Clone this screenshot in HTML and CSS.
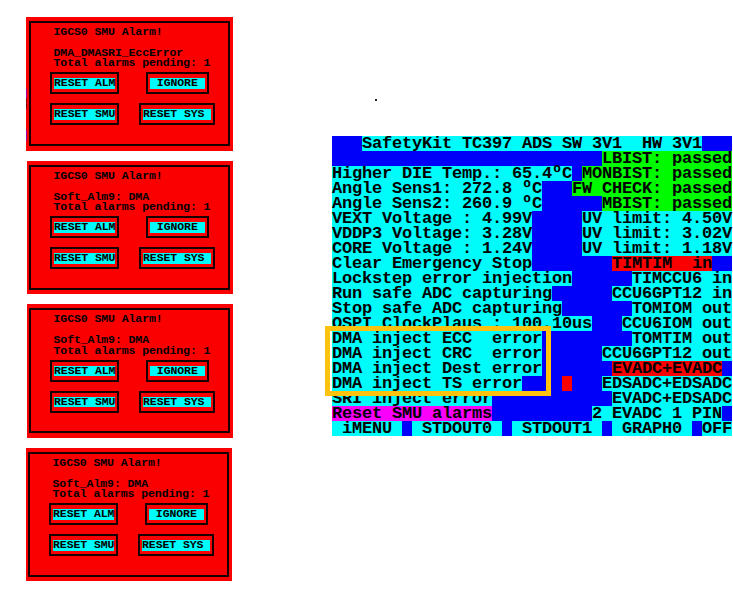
FILE: index.html
```
<!DOCTYPE html>
<html lang="en">
<head>
<meta charset="utf-8">
<title>SafetyKit TC397</title>
<link rel="stylesheet" href="styles.css">
</head>
<body>
<main class="page">
  <section class="alarms" id="alarms"></section>
  <section class="display">
    <p class="dot"></p>
    <div class="screen" id="screen"></div>
    <div class="highlight"></div>
  </section>
</main>
<script src="app.js"></script>
</body>
</html>
```
FILE: styles.css
```
* { box-sizing: border-box; }
body { margin: 0; background: #fff; color: #000; overflow: hidden; }
.page {
  display: flex;
  width: 733px;
  height: 595px;
  font-family: "Liberation Mono", monospace;
  font-weight: bold;
}
.alarms {
  display: flex;
  flex-direction: column;
  gap: 10px;
  width: 332px;
  padding: 17px 0 0 26px;
}
.alarm {
  width: 206px;
  height: 133.6px;
  margin-left: 1px;
  padding: 4px 3px 4px 2px;
  background: #fa0000;
  font-size: 11.5px;
  letter-spacing: -.08px;
  line-height: 10px;
  white-space: pre;
}
.alarm-first {
  width: 207px;
  margin-left: 0;
  padding-left: 3px;
  background: linear-gradient(#fa0000 72px, #a000a0 72px 81px, #900000 81px 92px, #fa0000 92px 113px, #a000a0 113px 124px, #fa0000 124px) 0 0 / 1px 100% no-repeat, #fa0000;
}
.alarm-last { margin-left: 0; }
.frame {
  height: 125px;
  padding: 4px 0 0 22.5px;
  border: 2px solid #180000;
}
.frame p { margin: 0; height: 10.3px; }
.frame .source { margin-top: 10.8px; }
.buttons {
  display: grid;
  grid-template-columns: 89px 78px;
  row-gap: 9px;
  margin: 3.8px 0 0 -3.5px;
}
.button {
  width: max-content;
  height: 22px;
  padding: 4px 2px;
  border: 2px solid #180000;
}
.button-ignore { margin-left: 7px; }
.button span {
  display: block;
  height: 10.5px;
  line-height: 10px;
  background: #00fbfb;
}
.display { position: relative; width: 400px; padding-top: 99px; }
.dot { width: 2px; height: 2px; margin: 0 0 35px 43px; background: #222; }
.screen {
  width: 400px;
  background: #0000fa;
  font-size: 17px;
  line-height: 15px;
}
.row {
  display: grid;
  grid-template-columns: repeat(40, 10px);
  height: 15px;
}
.cell { height: 15px; letter-spacing: -.202px; white-space: pre; }
.cyan { background: #00fbfb; }
.green { background: #00fa00; }
.red { background: #fa0000; }
.magenta { background: #fa00fa; }
.highlight {
  position: absolute;
  left: -7px;
  top: 326px;
  width: 226px;
  height: 70px;
  border: 5px solid #ffc20e;
}
```
FILE: app.js
```
const sources = ["DMA_DMASRI_EccError", "Soft_Alm9: DMA", "Soft_Alm9: DMA", "Soft_Alm9: DMA"];
document.getElementById("alarms").innerHTML = sources.map((source, i) => `
  <article class="alarm ${i === 0 ? "alarm-first" : i === 3 ? "alarm-last" : ""}"><div class="frame"><p>IGCS0 SMU Alarm!</p><p class="source">${source}</p><p>Total alarms pending: 1</p><div class="buttons"><div class="button"><span>RESET ALM</span></div><div class="button button-ignore"><span> IGNORE </span></div><div class="button"><span>RESET SMU</span></div><div class="button"><span>RESET SYS </span></div></div></div></article>`).join("");

// Each segment: [start column, text, background]
const c = "cyan", g = "green", r = "red", m = "magenta";
const rows = [
  [[3, "SafetyKit TC397 ADS SW 3V1  HW 3V1", c]],
  [[27, "LBIST: passed", g]],
  [[0, "Higher DIE Temp.: 65.4ºC", c], [25, "MONBIST: passed", g]],
  [[0, "Angle Sens1: 272.8 ºC", c], [24, "FW CHECK: passed", g]],
  [[0, "Angle Sens2: 260.9 ºC", c], [27, "MBIST: passed", g]],
  [[0, "VEXT Voltage : 4.99V", c], [25, "UV limit: 4.50V", c]],
  [[0, "VDDP3 Voltage: 3.28V", c], [25, "UV limit: 3.02V", c]],
  [[0, "CORE Voltage : 1.24V", c], [25, "UV limit: 1.18V", c]],
  [[0, "Clear Emergency Stop", c], [28, "TIMTIM  in", r]],
  [[0, "Lockstep error injection", c], [30, "TIMCCU6 in", c]],
  [[0, "Run safe ADC capturing", c], [28, "CCU6GPT12 in", c]],
  [[0, "Stop safe ADC capturing", c], [30, "TOMIOM out", c]],
  [[0, "QSPI ClockPlaus : 100.10us", c], [29, "CCU6IOM out", c]],
  [[0, "DMA inject ECC  error", c], [30, "TOMTIM out", c]],
  [[0, "DMA inject CRC  error", c], [27, "CCU6GPT12 out", c]],
  [[0, "DMA inject Dest error", c], [28, "EVADC+EVADC", r]],
  [[0, "DMA inject TS error", c], [23, " ", r], [27, "EDSADC+EDSADC", c]],
  [[0, "SRI inject error", c], [28, "EVADC+EDSADC", c]],
  [[0, "Reset SMU alarms", m], [26, "2 EVADC 1 PIN", c]],
  [[0, " iMENU ", c], [8, " STDOUT0 ", c], [18, " STDOUT1 ", c], [28, " GRAPH0 ", c], [37, "OFF", c]]
];
document.getElementById("screen").innerHTML = rows.map(row => `<div class="row">${row.map(([start, text, colour]) =>
  `<span class="cell ${colour}" style="grid-column: ${start + 1} / span ${text.length}">${text}</span>`).join("")}</div>`).join("");
```
